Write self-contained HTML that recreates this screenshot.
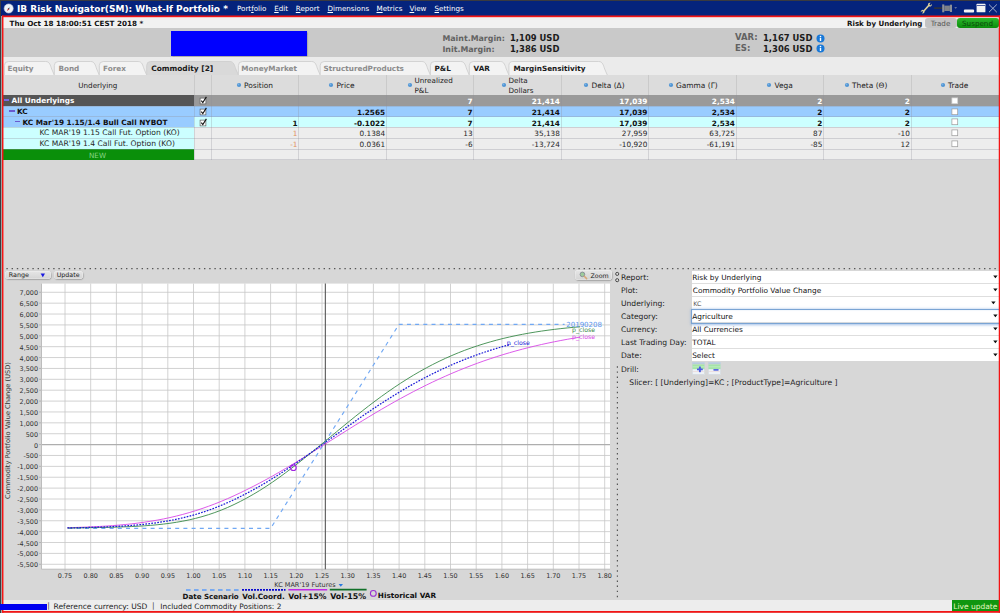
<!DOCTYPE html>
<html><head><meta charset="utf-8"><title>IB Risk Navigator</title>
<style>
html,body{margin:0;padding:0;}
body{width:1000px;height:613px;overflow:hidden;background:#d7d7d7;font-family:"DejaVu Sans","Liberation Sans",sans-serif;position:relative;}
#root{position:absolute;left:0;top:0;width:1000px;height:613px;overflow:hidden;}
#root div{position:absolute;box-sizing:border-box;}
#root svg{position:absolute;}
.t{}
u{text-decoration:underline;}
</style></head><body><div id="root">
<div style="left:0px;top:0px;width:1000px;height:613px;background:#d7d7d7;"></div>
<div style="left:0px;top:0px;width:1000px;height:16px;background:#05237c;"></div>
<div style="left:0px;top:0px;width:1000px;height:1px;background:#3a3a40;"></div>
<div style="left:0px;top:0px;width:1px;height:613px;background:#3a3a40;"></div>
<div style="left:1px;top:16px;width:1.3px;height:597px;background:#a0a0a0;"></div>
<svg style="left:0;top:0" width="1000" height="613" viewBox="0 0 1000 613"><g fill="#f41414"><rect x="2" y="15.7" width="998" height="1.5"/><rect x="2" y="15.7" width="1.45" height="596.8"/><rect x="998.75" y="15.7" width="1.25" height="596.8"/><rect x="2" y="611.1" width="998" height="1.4"/></g></svg>
<svg style="left:0px;top:0px" width="16" height="16" viewBox="0 0 16 16"><circle cx="8.7" cy="8.5" r="4.55" fill="#eef3f8" stroke="#c4ccdc" stroke-width="0.6"/><path d="M10.5 6.2 L9.3 9.2 L8.1 8.2 Z" fill="#a8b8d8"/><path d="M6.9 11.3 L8.0 8.2 L9.3 9.2 Z" fill="#e03030"/><circle cx="8.7" cy="8.7" r="0.6" fill="#333"/></svg>
<div class="t" style="top:2.70px;font-size:9.0px;line-height:12.6px;color:#fff;white-space:nowrap;font-weight:bold;left:17px;">IB Risk Navigator(SM): What-If Portfolio *</div>
<div class="t" style="top:3.90px;font-size:7.15px;line-height:10.01px;color:#fff;white-space:nowrap;left:237px;">Port<u>f</u>olio</div>
<div class="t" style="top:3.90px;font-size:7.15px;line-height:10.01px;color:#fff;white-space:nowrap;left:274.2px;"><u>E</u>dit</div>
<div class="t" style="top:3.90px;font-size:7.15px;line-height:10.01px;color:#fff;white-space:nowrap;left:295.8px;"><u>R</u>eport</div>
<div class="t" style="top:3.90px;font-size:7.15px;line-height:10.01px;color:#fff;white-space:nowrap;left:327.5px;"><u>D</u>imensions</div>
<div class="t" style="top:3.90px;font-size:7.15px;line-height:10.01px;color:#fff;white-space:nowrap;left:376.5px;"><u>M</u>etrics</div>
<div class="t" style="top:3.90px;font-size:7.15px;line-height:10.01px;color:#fff;white-space:nowrap;left:409.5px;"><u>V</u>iew</div>
<div class="t" style="top:3.90px;font-size:7.15px;line-height:10.01px;color:#fff;white-space:nowrap;left:434.5px;"><u>S</u>ettings</div>
<svg style="left:915px;top:0px" width="85" height="16" viewBox="915 0 85 16"><path d="M923.6 11.2 L929 5.2" stroke="#dccf9a" stroke-width="1.7"/><path d="M927.9 5.0 a2.2 2.2 0 0 1 2.6 -2.2 l-1.1 1.7 1.1 0.9 1.4 -1.5 a2.2 2.2 0 0 1 -2.6 2.6z" fill="#dccf9a"/><path d="M924.6 11.4 a2.1 2.1 0 0 1 -2.5 2.0 l1.0 -1.6 -1.0 -0.9 -1.3 1.4 a2.1 2.1 0 0 1 2.4 -2.4z" fill="#dccf9a"/><rect x="934.1" y="7.3" width="8.4" height="1.6" fill="#30343c"/><rect x="942.2" y="4.4" width="2.1" height="7.9" fill="#8c9098"/><rect x="944.3" y="5.6" width="5.6" height="5.4" fill="#7c8088"/><rect x="949.9" y="4.7" width="2.1" height="7.3" fill="#8c9098"/><path d="M954.3 7.2 h2.8 l-1.4 1.5z" fill="#8088a0"/><rect x="963.9" y="9.6" width="10.2" height="3" rx="1" fill="#f4f4f4"/><rect x="976.6" y="3.8" width="8.8" height="8.5" rx="0.5" fill="#f4f4f4"/><rect x="977" y="5" width="8" height="0.9" fill="#3a4f98"/><path d="M989 4.5 L996.8 12.2 M996.8 4.5 L989 12.2" stroke="#b4bcd4" stroke-width="0.9"/></svg>
<div style="left:3px;top:17px;width:995.7px;height:11.2px;background:#f1f1f1;"></div>
<div class="t" style="top:18.96px;font-size:7.2px;line-height:10.08px;color:#111;white-space:nowrap;font-weight:bold;left:9.5px;">Thu Oct 18 18:00:51 CEST 2018 *</div>
<div class="t" style="top:18.93px;font-size:7.1px;line-height:9.94px;color:#111;white-space:nowrap;font-weight:bold;left:847px;">Risk by Underlying</div>
<div style="left:925px;top:17.5px;width:31.5px;height:10.8px;background:#c3c3c3;border-radius:3px;"></div>
<div class="t" style="top:18.56px;font-size:7.2px;line-height:10.08px;color:#555;white-space:nowrap;left:740.5px;width:400px;text-align:center;">Trade</div>
<div style="left:957px;top:17.5px;width:41.5px;height:10.8px;background:linear-gradient(#2cb82c,#0c8c0c);border-radius:3px;"></div>
<div class="t" style="top:18.56px;font-size:7.2px;line-height:10.08px;color:#0a4a0a;white-space:nowrap;left:777.5px;width:400px;text-align:center;">Suspend</div>
<div style="left:3px;top:28.2px;width:995.7px;height:28.8px;background:#c9c9c9;"></div>
<div style="left:171px;top:31px;width:136px;height:24.5px;background:#0000ff;box-shadow:1.2px 1.2px 1.5px rgba(0,0,0,.45);"></div>
<div class="t" style="top:32.67px;font-size:7.9px;line-height:11.06px;color:#626262;white-space:nowrap;font-weight:bold;left:442.4px;">Maint.Margin:</div>
<div class="t" style="top:43.67px;font-size:7.9px;line-height:11.06px;color:#626262;white-space:nowrap;font-weight:bold;left:442.4px;">Init.Margin:</div>
<div class="t" style="top:32.70px;font-size:8.42px;line-height:11.79px;color:#1c1c1c;white-space:nowrap;font-weight:bold;left:510px;">1,109 USD</div>
<div class="t" style="top:43.70px;font-size:8.42px;line-height:11.79px;color:#1c1c1c;white-space:nowrap;font-weight:bold;left:510px;">1,386 USD</div>
<div class="t" style="top:32.25px;font-size:8.5px;line-height:11.9px;color:#626262;white-space:nowrap;font-weight:bold;left:735px;">VAR:</div>
<div class="t" style="top:43.25px;font-size:8.5px;line-height:11.9px;color:#626262;white-space:nowrap;font-weight:bold;left:735px;">ES:</div>
<div class="t" style="top:32.70px;font-size:8.42px;line-height:11.79px;color:#1c1c1c;white-space:nowrap;font-weight:bold;left:763px;">1,167 USD</div>
<div class="t" style="top:43.70px;font-size:8.42px;line-height:11.79px;color:#1c1c1c;white-space:nowrap;font-weight:bold;left:763px;">1,306 USD</div>
<svg style="left:815.5px;top:33.5px" width="9" height="9" viewBox="0 0 9 9"><circle cx="4.5" cy="4.5" r="4" fill="#1878d8"/><circle cx="4.5" cy="2.5" r="0.8" fill="#fff"/><rect x="3.8" y="3.8" width="1.4" height="3.2" fill="#fff"/></svg>
<svg style="left:815.5px;top:43.599999999999994px" width="9" height="9" viewBox="0 0 9 9"><circle cx="4.5" cy="4.5" r="4" fill="#1878d8"/><circle cx="4.5" cy="2.5" r="0.8" fill="#fff"/><rect x="3.8" y="3.8" width="1.4" height="3.2" fill="#fff"/></svg>
<div style="left:3px;top:57px;width:995.7px;height:18px;background:#ebebeb;"></div>
<svg style="left:0;top:57px" width="1000" height="19" viewBox="0 57 1000 19"><path d="M4.4 75.5 L4.4 65.5 Q4.4 61.5 8.4 61.5 L45.8 61.5 C49.699999999999996 61.5 50.4 65.5 51.699999999999996 69 L54.5 75.5 Z" fill="#f3f3f3" stroke="#cfcfcf" stroke-width="0.9"/><path d="M54.3 75.5 L54.3 65.5 Q54.3 61.5 58.3 61.5 L90.8 61.5 C94.7 61.5 95.39999999999999 65.5 96.7 69 L99.5 75.5 Z" fill="#f3f3f3" stroke="#cfcfcf" stroke-width="0.9"/><path d="M99.3 75.5 L99.3 65.5 Q99.3 61.5 103.3 61.5 L138.2 61.5 C142.1 61.5 142.79999999999998 65.5 144.1 69 L146.89999999999998 75.5 Z" fill="#f3f3f3" stroke="#cfcfcf" stroke-width="0.9"/><path d="M146.7 75.5 L146.7 65.5 Q146.7 61.5 150.7 61.5 L229.9 61.5 C233.8 61.5 234.5 65.5 235.8 69 L238.6 75.5 Z" fill="#d9d9d9" stroke="#cfcfcf" stroke-width="0.9"/><path d="M238.4 75.5 L238.4 65.5 Q238.4 61.5 242.4 61.5 L311.7 61.5 C315.59999999999997 61.5 316.3 65.5 317.59999999999997 69 L320.4 75.5 Z" fill="#f3f3f3" stroke="#cfcfcf" stroke-width="0.9"/><path d="M320.2 75.5 L320.2 65.5 Q320.2 61.5 324.2 61.5 L421.9 61.5 C425.79999999999995 61.5 426.5 65.5 427.79999999999995 69 L430.59999999999997 75.5 Z" fill="#f3f3f3" stroke="#cfcfcf" stroke-width="0.9"/><path d="M430.4 75.5 L430.4 65.5 Q430.4 61.5 434.4 61.5 L460.8 61.5 C464.7 61.5 465.40000000000003 65.5 466.7 69 L469.5 75.5 Z" fill="#f3f3f3" stroke="#cfcfcf" stroke-width="0.9"/><path d="M469.3 75.5 L469.3 65.5 Q469.3 61.5 473.3 61.5 L500.4 61.5 C504.29999999999995 61.5 505.0 65.5 506.29999999999995 69 L509.09999999999997 75.5 Z" fill="#f3f3f3" stroke="#cfcfcf" stroke-width="0.9"/><path d="M508.9 75.5 L508.9 65.5 Q508.9 61.5 512.9 61.5 L598.8 61.5 C602.6999999999999 61.5 603.4 65.5 604.6999999999999 69 L607.5 75.5 Z" fill="#f3f3f3" stroke="#cfcfcf" stroke-width="0.9"/></svg>
<div class="t" style="top:64.12px;font-size:7.25px;line-height:10.15px;color:#8c8c8c;white-space:nowrap;font-weight:bold;left:7.5px;">Equity</div>
<div class="t" style="top:64.12px;font-size:7.25px;line-height:10.15px;color:#8c8c8c;white-space:nowrap;font-weight:bold;left:58.4px;">Bond</div>
<div class="t" style="top:64.12px;font-size:7.25px;line-height:10.15px;color:#8c8c8c;white-space:nowrap;font-weight:bold;left:103px;">Forex</div>
<div class="t" style="top:63.98px;font-size:7.45px;line-height:10.43px;color:#1a1a1a;white-space:nowrap;font-weight:bold;left:151.2px;">Commodity [2]</div>
<div class="t" style="top:64.12px;font-size:7.25px;line-height:10.15px;color:#8c8c8c;white-space:nowrap;font-weight:bold;left:241.3px;">MoneyMarket</div>
<div class="t" style="top:64.12px;font-size:7.25px;line-height:10.15px;color:#8c8c8c;white-space:nowrap;font-weight:bold;left:323.6px;">StructuredProducts</div>
<div class="t" style="top:64.12px;font-size:7.25px;line-height:10.15px;color:#1a1a1a;white-space:nowrap;font-weight:bold;left:434.5px;">P&amp;L</div>
<div class="t" style="top:64.12px;font-size:7.25px;line-height:10.15px;color:#1a1a1a;white-space:nowrap;font-weight:bold;left:473.6px;">VAR</div>
<div class="t" style="top:64.12px;font-size:7.25px;line-height:10.15px;color:#1a1a1a;white-space:nowrap;font-weight:bold;left:513.4px;">MarginSensitivity</div>
<div style="left:3px;top:75px;width:995.7px;height:20.3px;background:#dcdcdc;"></div>
<div style="left:193.5px;top:75px;width:1px;height:20.3px;background:#cacaca;"></div>
<div style="left:210.8px;top:75px;width:1px;height:20.3px;background:#cacaca;"></div>
<div style="left:298.1px;top:75px;width:1px;height:20.3px;background:#cacaca;"></div>
<div style="left:385.7px;top:75px;width:1px;height:20.3px;background:#cacaca;"></div>
<div style="left:473.2px;top:75px;width:1px;height:20.3px;background:#cacaca;"></div>
<div style="left:560.5px;top:75px;width:1px;height:20.3px;background:#cacaca;"></div>
<div style="left:648.0px;top:75px;width:1px;height:20.3px;background:#cacaca;"></div>
<div style="left:735.5px;top:75px;width:1px;height:20.3px;background:#cacaca;"></div>
<div style="left:823.0px;top:75px;width:1px;height:20.3px;background:#cacaca;"></div>
<div style="left:910.5px;top:75px;width:1px;height:20.3px;background:#cacaca;"></div>
<div class="t" style="top:80.96px;font-size:7.2px;line-height:10.08px;color:#222;white-space:nowrap;left:-102.2px;width:400px;text-align:center;">Underlying</div>
<div class="t" style="top:80.69px;font-size:7.45px;line-height:10.43px;color:#222;white-space:nowrap;left:244px;">Position</div>
<svg style="left:235.8px;top:81.9px" width="6" height="6" viewBox="0 0 6 6"><circle cx="3" cy="3" r="2.1" fill="#4f94d4"/><circle cx="2.5" cy="2.4" r="0.9" fill="#8cc0ec" opacity=".7"/></svg>
<div class="t" style="top:80.69px;font-size:7.45px;line-height:10.43px;color:#222;white-space:nowrap;left:336.5px;">Price</div>
<svg style="left:328.3px;top:81.9px" width="6" height="6" viewBox="0 0 6 6"><circle cx="3" cy="3" r="2.1" fill="#4f94d4"/><circle cx="2.5" cy="2.4" r="0.9" fill="#8cc0ec" opacity=".7"/></svg>
<div class="t" style="top:80.69px;font-size:7.45px;line-height:10.43px;color:#222;white-space:nowrap;left:591.5px;">Delta (Δ)</div>
<svg style="left:583.3px;top:81.9px" width="6" height="6" viewBox="0 0 6 6"><circle cx="3" cy="3" r="2.1" fill="#4f94d4"/><circle cx="2.5" cy="2.4" r="0.9" fill="#8cc0ec" opacity=".7"/></svg>
<div class="t" style="top:80.69px;font-size:7.45px;line-height:10.43px;color:#222;white-space:nowrap;left:676px;">Gamma (Γ)</div>
<svg style="left:667.8px;top:81.9px" width="6" height="6" viewBox="0 0 6 6"><circle cx="3" cy="3" r="2.1" fill="#4f94d4"/><circle cx="2.5" cy="2.4" r="0.9" fill="#8cc0ec" opacity=".7"/></svg>
<div class="t" style="top:80.69px;font-size:7.45px;line-height:10.43px;color:#222;white-space:nowrap;left:774.5px;">Vega</div>
<svg style="left:766.3px;top:81.9px" width="6" height="6" viewBox="0 0 6 6"><circle cx="3" cy="3" r="2.1" fill="#4f94d4"/><circle cx="2.5" cy="2.4" r="0.9" fill="#8cc0ec" opacity=".7"/></svg>
<div class="t" style="top:80.69px;font-size:7.45px;line-height:10.43px;color:#222;white-space:nowrap;left:852px;">Theta (Θ)</div>
<svg style="left:843.8px;top:81.9px" width="6" height="6" viewBox="0 0 6 6"><circle cx="3" cy="3" r="2.1" fill="#4f94d4"/><circle cx="2.5" cy="2.4" r="0.9" fill="#8cc0ec" opacity=".7"/></svg>
<div class="t" style="top:80.69px;font-size:7.45px;line-height:10.43px;color:#222;white-space:nowrap;left:948px;">Trade</div>
<svg style="left:939.8px;top:81.9px" width="6" height="6" viewBox="0 0 6 6"><circle cx="3" cy="3" r="2.1" fill="#4f94d4"/><circle cx="2.5" cy="2.4" r="0.9" fill="#8cc0ec" opacity=".7"/></svg>
<div class="t" style="top:76.16px;font-size:7.2px;line-height:10.08px;color:#222;white-space:nowrap;left:414.5px;">Unrealized</div>
<div class="t" style="top:86.36px;font-size:7.2px;line-height:10.08px;color:#222;white-space:nowrap;left:414.5px;">P&amp;L</div>
<svg style="left:406.5px;top:82.0px" width="6" height="6" viewBox="0 0 6 6"><circle cx="3" cy="3" r="2.1" fill="#4f94d4"/><circle cx="2.5" cy="2.4" r="0.9" fill="#8cc0ec" opacity=".7"/></svg>
<div class="t" style="top:76.16px;font-size:7.2px;line-height:10.08px;color:#222;white-space:nowrap;left:508.5px;">Delta</div>
<div class="t" style="top:86.36px;font-size:7.2px;line-height:10.08px;color:#222;white-space:nowrap;left:508.5px;">Dollars</div>
<svg style="left:501px;top:82.0px" width="6" height="6" viewBox="0 0 6 6"><circle cx="3" cy="3" r="2.1" fill="#4f94d4"/><circle cx="2.5" cy="2.4" r="0.9" fill="#8cc0ec" opacity=".7"/></svg>
<div style="left:3px;top:95.3px;width:191px;height:10.700000000000003px;background:#555555;"></div>
<div style="left:194px;top:95.3px;width:804.7px;height:10.700000000000003px;background:#9a9a9a;"></div>
<div style="left:3px;top:106px;width:191px;height:10.700000000000003px;background:#99ccff;"></div>
<div style="left:194px;top:106px;width:804.7px;height:10.700000000000003px;background:#99ccff;"></div>
<div style="left:3px;top:116.7px;width:191px;height:10.700000000000003px;background:#99ccff;"></div>
<div style="left:194px;top:116.7px;width:804.7px;height:10.700000000000003px;background:#ccffff;"></div>
<div style="left:3px;top:127.4px;width:191px;height:10.799999999999983px;background:#ccffff;"></div>
<div style="left:194px;top:127.4px;width:804.7px;height:10.799999999999983px;background:#ededed;"></div>
<div style="left:3px;top:138.2px;width:191px;height:10.800000000000011px;background:#ccffff;"></div>
<div style="left:194px;top:138.2px;width:804.7px;height:10.800000000000011px;background:#ededed;"></div>
<div style="left:3px;top:149px;width:191px;height:10.800000000000011px;background:#0a8f0a;"></div>
<div style="left:194px;top:149px;width:804.7px;height:10.800000000000011px;background:#ededed;"></div>
<div style="left:3px;top:105.6px;width:995.7px;height:0.8px;background:rgba(150,150,160,.35);"></div>
<div style="left:3px;top:116.3px;width:995.7px;height:0.8px;background:rgba(150,150,160,.35);"></div>
<div style="left:3px;top:127.0px;width:995.7px;height:0.8px;background:rgba(150,150,160,.35);"></div>
<div style="left:3px;top:137.79999999999998px;width:995.7px;height:0.8px;background:rgba(150,150,160,.35);"></div>
<div style="left:3px;top:148.6px;width:995.7px;height:0.8px;background:rgba(150,150,160,.35);"></div>
<div style="left:194px;top:159.4px;width:804.7px;height:0.8px;background:rgba(150,150,160,.35);"></div>
<div style="left:193.5px;top:95.3px;width:1px;height:64.5px;background:rgba(140,140,150,.28);"></div>
<div style="left:210.8px;top:95.3px;width:1px;height:64.5px;background:rgba(140,140,150,.28);"></div>
<div style="left:298.1px;top:95.3px;width:1px;height:64.5px;background:rgba(140,140,150,.28);"></div>
<div style="left:385.7px;top:95.3px;width:1px;height:64.5px;background:rgba(140,140,150,.28);"></div>
<div style="left:473.2px;top:95.3px;width:1px;height:64.5px;background:rgba(140,140,150,.28);"></div>
<div style="left:560.5px;top:95.3px;width:1px;height:64.5px;background:rgba(140,140,150,.28);"></div>
<div style="left:648.0px;top:95.3px;width:1px;height:64.5px;background:rgba(140,140,150,.28);"></div>
<div style="left:735.5px;top:95.3px;width:1px;height:64.5px;background:rgba(140,140,150,.28);"></div>
<div style="left:823.0px;top:95.3px;width:1px;height:64.5px;background:rgba(140,140,150,.28);"></div>
<div style="left:910.5px;top:95.3px;width:1px;height:64.5px;background:rgba(140,140,150,.28);"></div>
<div class="t" style="top:96.42px;font-size:7.33px;line-height:10.26px;color:#fff;white-space:nowrap;font-weight:bold;left:11.5px;">All Underlyings</div>
<div style="left:3.9000000000000004px;top:99.35px;width:5.4px;height:1.7px;background:#7a6ae0;"></div>
<div class="t" style="top:97.24px;font-size:7.3px;line-height:10.22px;color:#fff;white-space:nowrap;font-weight:bold;right:527.4000000000001px;text-align:right;">7</div>
<div class="t" style="top:97.24px;font-size:7.3px;line-height:10.22px;color:#fff;white-space:nowrap;font-weight:bold;right:440.1px;text-align:right;">21,414</div>
<div class="t" style="top:97.24px;font-size:7.3px;line-height:10.22px;color:#fff;white-space:nowrap;font-weight:bold;right:352.6px;text-align:right;">17,039</div>
<div class="t" style="top:97.24px;font-size:7.3px;line-height:10.22px;color:#fff;white-space:nowrap;font-weight:bold;right:265.1px;text-align:right;">2,534</div>
<div class="t" style="top:97.24px;font-size:7.3px;line-height:10.22px;color:#fff;white-space:nowrap;font-weight:bold;right:177.60000000000002px;text-align:right;">2</div>
<div class="t" style="top:97.24px;font-size:7.3px;line-height:10.22px;color:#fff;white-space:nowrap;font-weight:bold;right:90.10000000000002px;text-align:right;">2</div>
<svg style="left:198.6px;top:96.25px" width="9" height="9" viewBox="0 0 9 9"><rect x="1.1" y="2.1" width="5.8" height="5.8" fill="#fff" stroke="#555" stroke-width="0.65"/><path d="M2.3 4.7 L3.8 6.6 L7.4 0.9" fill="none" stroke="#111" stroke-width="1.1"/></svg>
<svg style="left:950.5px;top:96.95px" width="8" height="8" viewBox="0 0 8 8"><rect x="0.9" y="0.9" width="5.8" height="5.8" fill="#fff" stroke="#ccc" stroke-width="0.7"/></svg>
<div class="t" style="top:107.12px;font-size:7.33px;line-height:10.26px;color:#111;white-space:nowrap;font-weight:bold;left:17px;">KC</div>
<div style="left:9.4px;top:110.04999999999998px;width:5.4px;height:1.7px;background:#6a5acd;"></div>
<div class="t" style="top:107.94px;font-size:7.3px;line-height:10.22px;color:#111;white-space:nowrap;font-weight:bold;right:614.9000000000001px;text-align:right;">1.2565</div>
<div class="t" style="top:107.94px;font-size:7.3px;line-height:10.22px;color:#111;white-space:nowrap;font-weight:bold;right:527.4000000000001px;text-align:right;">7</div>
<div class="t" style="top:107.94px;font-size:7.3px;line-height:10.22px;color:#111;white-space:nowrap;font-weight:bold;right:440.1px;text-align:right;">21,414</div>
<div class="t" style="top:107.94px;font-size:7.3px;line-height:10.22px;color:#111;white-space:nowrap;font-weight:bold;right:352.6px;text-align:right;">17,039</div>
<div class="t" style="top:107.94px;font-size:7.3px;line-height:10.22px;color:#111;white-space:nowrap;font-weight:bold;right:265.1px;text-align:right;">2,534</div>
<div class="t" style="top:107.94px;font-size:7.3px;line-height:10.22px;color:#111;white-space:nowrap;font-weight:bold;right:177.60000000000002px;text-align:right;">2</div>
<div class="t" style="top:107.94px;font-size:7.3px;line-height:10.22px;color:#111;white-space:nowrap;font-weight:bold;right:90.10000000000002px;text-align:right;">2</div>
<svg style="left:198.6px;top:106.94999999999999px" width="9" height="9" viewBox="0 0 9 9"><rect x="1.1" y="2.1" width="5.8" height="5.8" fill="#fff" stroke="#555" stroke-width="0.65"/><path d="M2.3 4.7 L3.8 6.6 L7.4 0.9" fill="none" stroke="#111" stroke-width="1.1"/></svg>
<svg style="left:950.5px;top:107.64999999999999px" width="8" height="8" viewBox="0 0 8 8"><rect x="0.9" y="0.9" width="5.8" height="5.8" fill="#fff" stroke="#9a9a9a" stroke-width="0.7"/></svg>
<div class="t" style="top:117.82px;font-size:7.33px;line-height:10.26px;color:#111;white-space:nowrap;font-weight:bold;left:22.5px;">KC Mar'19 1.15/1.4 Bull Call NYBOT</div>
<div style="left:14.9px;top:120.75px;width:5.4px;height:1.7px;background:#6a5acd;"></div>
<div class="t" style="top:118.64px;font-size:7.3px;line-height:10.22px;color:#111;white-space:nowrap;font-weight:bold;right:702.5px;text-align:right;">1</div>
<div class="t" style="top:118.64px;font-size:7.3px;line-height:10.22px;color:#111;white-space:nowrap;font-weight:bold;right:614.9000000000001px;text-align:right;">-0.1022</div>
<div class="t" style="top:118.64px;font-size:7.3px;line-height:10.22px;color:#111;white-space:nowrap;font-weight:bold;right:527.4000000000001px;text-align:right;">7</div>
<div class="t" style="top:118.64px;font-size:7.3px;line-height:10.22px;color:#111;white-space:nowrap;font-weight:bold;right:440.1px;text-align:right;">21,414</div>
<div class="t" style="top:118.64px;font-size:7.3px;line-height:10.22px;color:#111;white-space:nowrap;font-weight:bold;right:352.6px;text-align:right;">17,039</div>
<div class="t" style="top:118.64px;font-size:7.3px;line-height:10.22px;color:#111;white-space:nowrap;font-weight:bold;right:265.1px;text-align:right;">2,534</div>
<div class="t" style="top:118.64px;font-size:7.3px;line-height:10.22px;color:#111;white-space:nowrap;font-weight:bold;right:177.60000000000002px;text-align:right;">2</div>
<div class="t" style="top:118.64px;font-size:7.3px;line-height:10.22px;color:#111;white-space:nowrap;font-weight:bold;right:90.10000000000002px;text-align:right;">2</div>
<svg style="left:198.6px;top:117.65px" width="9" height="9" viewBox="0 0 9 9"><rect x="1.1" y="2.1" width="5.8" height="5.8" fill="#fff" stroke="#555" stroke-width="0.65"/><path d="M2.3 4.7 L3.8 6.6 L7.4 0.9" fill="none" stroke="#111" stroke-width="1.1"/></svg>
<svg style="left:950.5px;top:118.35000000000001px" width="8" height="8" viewBox="0 0 8 8"><rect x="0.9" y="0.9" width="5.8" height="5.8" fill="#fff" stroke="#9a9a9a" stroke-width="0.7"/></svg>
<div class="t" style="top:128.38px;font-size:7.6px;line-height:10.64px;color:#262626;white-space:nowrap;left:39.5px;">KC MAR'19 1.15 Call Fut. Option (KO)</div>
<div class="t" style="top:129.39px;font-size:7.3px;line-height:10.22px;color:#e2945e;white-space:nowrap;right:702.5px;text-align:right;">1</div>
<div class="t" style="top:129.39px;font-size:7.3px;line-height:10.22px;color:#262626;white-space:nowrap;right:614.9000000000001px;text-align:right;">0.1384</div>
<div class="t" style="top:129.39px;font-size:7.3px;line-height:10.22px;color:#262626;white-space:nowrap;right:527.4000000000001px;text-align:right;">13</div>
<div class="t" style="top:129.39px;font-size:7.3px;line-height:10.22px;color:#262626;white-space:nowrap;right:440.1px;text-align:right;">35,138</div>
<div class="t" style="top:129.39px;font-size:7.3px;line-height:10.22px;color:#262626;white-space:nowrap;right:352.6px;text-align:right;">27,959</div>
<div class="t" style="top:129.39px;font-size:7.3px;line-height:10.22px;color:#262626;white-space:nowrap;right:265.1px;text-align:right;">63,725</div>
<div class="t" style="top:129.39px;font-size:7.3px;line-height:10.22px;color:#262626;white-space:nowrap;right:177.60000000000002px;text-align:right;">87</div>
<div class="t" style="top:129.39px;font-size:7.3px;line-height:10.22px;color:#262626;white-space:nowrap;right:90.10000000000002px;text-align:right;">-10</div>
<svg style="left:950.5px;top:129.10000000000002px" width="8" height="8" viewBox="0 0 8 8"><rect x="0.9" y="0.9" width="5.8" height="5.8" fill="#fff" stroke="#9a9a9a" stroke-width="0.7"/></svg>
<div class="t" style="top:139.18px;font-size:7.6px;line-height:10.64px;color:#262626;white-space:nowrap;left:39.5px;">KC MAR'19 1.4 Call Fut. Option (KO)</div>
<div class="t" style="top:140.19px;font-size:7.3px;line-height:10.22px;color:#e2945e;white-space:nowrap;right:702.5px;text-align:right;">-1</div>
<div class="t" style="top:140.19px;font-size:7.3px;line-height:10.22px;color:#262626;white-space:nowrap;right:614.9000000000001px;text-align:right;">0.0361</div>
<div class="t" style="top:140.19px;font-size:7.3px;line-height:10.22px;color:#262626;white-space:nowrap;right:527.4000000000001px;text-align:right;">-6</div>
<div class="t" style="top:140.19px;font-size:7.3px;line-height:10.22px;color:#262626;white-space:nowrap;right:440.1px;text-align:right;">-13,724</div>
<div class="t" style="top:140.19px;font-size:7.3px;line-height:10.22px;color:#262626;white-space:nowrap;right:352.6px;text-align:right;">-10,920</div>
<div class="t" style="top:140.19px;font-size:7.3px;line-height:10.22px;color:#262626;white-space:nowrap;right:265.1px;text-align:right;">-61,191</div>
<div class="t" style="top:140.19px;font-size:7.3px;line-height:10.22px;color:#262626;white-space:nowrap;right:177.60000000000002px;text-align:right;">-85</div>
<div class="t" style="top:140.19px;font-size:7.3px;line-height:10.22px;color:#262626;white-space:nowrap;right:90.10000000000002px;text-align:right;">12</div>
<svg style="left:950.5px;top:139.9px" width="8" height="8" viewBox="0 0 8 8"><rect x="0.9" y="0.9" width="5.8" height="5.8" fill="#fff" stroke="#9a9a9a" stroke-width="0.7"/></svg>
<div class="t" style="top:150.56px;font-size:7.2px;line-height:10.08px;color:#86d486;white-space:nowrap;left:-102.5px;width:400px;text-align:center;">NEW</div>
<div style="left:3px;top:159.8px;width:995.7px;height:440px;background:#d7d7d7;"></div>
<svg style="left:0;top:0" width="1000" height="613"><line x1="6.4" y1="268.6" x2="997" y2="268.6" stroke="#555" stroke-width="1.2" stroke-dasharray="1.4 3.8"/></svg>
<div style="left:5px;top:271.2px;width:46px;height:7.6px;background:linear-gradient(#e6e6e6,#d4d4d4);border-radius:3.2px;box-shadow:0.5px 0.8px 1.2px rgba(0,0,0,.3),inset 0 0 0 0.5px rgba(255,255,255,.5);"></div>
<div class="t" style="top:271.32px;font-size:6.4px;line-height:8.96px;color:#222;white-space:nowrap;left:8.8px;text-shadow:none;">Range</div>
<svg style="left:40px;top:272.8px" width="6" height="5" viewBox="0 0 6 5"><path d="M0.6 0.6 H5 L2.8 4.2Z" fill="#1a1ae0"/></svg>
<div style="left:53.6px;top:271.2px;width:29.5px;height:7.6px;background:linear-gradient(#e6e6e6,#d4d4d4);border-radius:3.2px;box-shadow:0.5px 0.8px 1.2px rgba(0,0,0,.3),inset 0 0 0 0.5px rgba(255,255,255,.5);"></div>
<div class="t" style="top:271.39px;font-size:6.3px;line-height:8.82px;color:#222;white-space:nowrap;left:-131.9px;width:400px;text-align:center;text-shadow:none;">Update</div>
<div style="left:575px;top:270px;width:36.5px;height:10px;background:linear-gradient(#e6e6e6,#d4d4d4);border-radius:3.2px;box-shadow:0.5px 0.8px 1.2px rgba(0,0,0,.3),inset 0 0 0 0.5px rgba(255,255,255,.5);"></div>
<div class="t" style="top:271.59px;font-size:6.3px;line-height:8.82px;color:#222;white-space:nowrap;left:590.5px;text-shadow:none;">Zoom</div>
<svg style="left:579px;top:270.5px" width="10" height="9" viewBox="0 0 10 9"><circle cx="3.4" cy="3.4" r="2.3" fill="#9ccc9c" stroke="#8a9098" stroke-width="1"/><path d="M5.3 5.3 L7.6 7.6" stroke="#d8a878" stroke-width="1.5" stroke-linecap="round"/></svg>
<svg style="left:0;top:0" width="1000" height="613" viewBox="0 0 1000 613"><rect x="41.5" y="283.6" width="568.5" height="285.6" fill="#fff"/><line x1="65.00" y1="283.6" x2="65.00" y2="569.2" stroke="#c7c7c7" stroke-width="0.8"/><line x1="65.00" y1="569.2" x2="65.00" y2="570.8000000000001" stroke="#b4b4b4" stroke-width="0.8"/><line x1="90.70" y1="283.6" x2="90.70" y2="569.2" stroke="#c7c7c7" stroke-width="0.8"/><line x1="90.70" y1="569.2" x2="90.70" y2="570.8000000000001" stroke="#b4b4b4" stroke-width="0.8"/><line x1="116.40" y1="283.6" x2="116.40" y2="569.2" stroke="#c7c7c7" stroke-width="0.8"/><line x1="116.40" y1="569.2" x2="116.40" y2="570.8000000000001" stroke="#b4b4b4" stroke-width="0.8"/><line x1="142.10" y1="283.6" x2="142.10" y2="569.2" stroke="#c7c7c7" stroke-width="0.8"/><line x1="142.10" y1="569.2" x2="142.10" y2="570.8000000000001" stroke="#b4b4b4" stroke-width="0.8"/><line x1="167.80" y1="283.6" x2="167.80" y2="569.2" stroke="#c7c7c7" stroke-width="0.8"/><line x1="167.80" y1="569.2" x2="167.80" y2="570.8000000000001" stroke="#b4b4b4" stroke-width="0.8"/><line x1="193.50" y1="283.6" x2="193.50" y2="569.2" stroke="#c7c7c7" stroke-width="0.8"/><line x1="193.50" y1="569.2" x2="193.50" y2="570.8000000000001" stroke="#b4b4b4" stroke-width="0.8"/><line x1="219.20" y1="283.6" x2="219.20" y2="569.2" stroke="#c7c7c7" stroke-width="0.8"/><line x1="219.20" y1="569.2" x2="219.20" y2="570.8000000000001" stroke="#b4b4b4" stroke-width="0.8"/><line x1="244.90" y1="283.6" x2="244.90" y2="569.2" stroke="#c7c7c7" stroke-width="0.8"/><line x1="244.90" y1="569.2" x2="244.90" y2="570.8000000000001" stroke="#b4b4b4" stroke-width="0.8"/><line x1="270.60" y1="283.6" x2="270.60" y2="569.2" stroke="#c7c7c7" stroke-width="0.8"/><line x1="270.60" y1="569.2" x2="270.60" y2="570.8000000000001" stroke="#b4b4b4" stroke-width="0.8"/><line x1="296.30" y1="283.6" x2="296.30" y2="569.2" stroke="#c7c7c7" stroke-width="0.8"/><line x1="296.30" y1="569.2" x2="296.30" y2="570.8000000000001" stroke="#b4b4b4" stroke-width="0.8"/><line x1="322.00" y1="283.6" x2="322.00" y2="569.2" stroke="#c7c7c7" stroke-width="0.8"/><line x1="322.00" y1="569.2" x2="322.00" y2="570.8000000000001" stroke="#b4b4b4" stroke-width="0.8"/><line x1="347.70" y1="283.6" x2="347.70" y2="569.2" stroke="#c7c7c7" stroke-width="0.8"/><line x1="347.70" y1="569.2" x2="347.70" y2="570.8000000000001" stroke="#b4b4b4" stroke-width="0.8"/><line x1="373.40" y1="283.6" x2="373.40" y2="569.2" stroke="#c7c7c7" stroke-width="0.8"/><line x1="373.40" y1="569.2" x2="373.40" y2="570.8000000000001" stroke="#b4b4b4" stroke-width="0.8"/><line x1="399.10" y1="283.6" x2="399.10" y2="569.2" stroke="#c7c7c7" stroke-width="0.8"/><line x1="399.10" y1="569.2" x2="399.10" y2="570.8000000000001" stroke="#b4b4b4" stroke-width="0.8"/><line x1="424.80" y1="283.6" x2="424.80" y2="569.2" stroke="#c7c7c7" stroke-width="0.8"/><line x1="424.80" y1="569.2" x2="424.80" y2="570.8000000000001" stroke="#b4b4b4" stroke-width="0.8"/><line x1="450.50" y1="283.6" x2="450.50" y2="569.2" stroke="#c7c7c7" stroke-width="0.8"/><line x1="450.50" y1="569.2" x2="450.50" y2="570.8000000000001" stroke="#b4b4b4" stroke-width="0.8"/><line x1="476.20" y1="283.6" x2="476.20" y2="569.2" stroke="#c7c7c7" stroke-width="0.8"/><line x1="476.20" y1="569.2" x2="476.20" y2="570.8000000000001" stroke="#b4b4b4" stroke-width="0.8"/><line x1="501.90" y1="283.6" x2="501.90" y2="569.2" stroke="#c7c7c7" stroke-width="0.8"/><line x1="501.90" y1="569.2" x2="501.90" y2="570.8000000000001" stroke="#b4b4b4" stroke-width="0.8"/><line x1="527.60" y1="283.6" x2="527.60" y2="569.2" stroke="#c7c7c7" stroke-width="0.8"/><line x1="527.60" y1="569.2" x2="527.60" y2="570.8000000000001" stroke="#b4b4b4" stroke-width="0.8"/><line x1="553.30" y1="283.6" x2="553.30" y2="569.2" stroke="#c7c7c7" stroke-width="0.8"/><line x1="553.30" y1="569.2" x2="553.30" y2="570.8000000000001" stroke="#b4b4b4" stroke-width="0.8"/><line x1="579.00" y1="283.6" x2="579.00" y2="569.2" stroke="#c7c7c7" stroke-width="0.8"/><line x1="579.00" y1="569.2" x2="579.00" y2="570.8000000000001" stroke="#b4b4b4" stroke-width="0.8"/><line x1="604.70" y1="283.6" x2="604.70" y2="569.2" stroke="#c7c7c7" stroke-width="0.8"/><line x1="604.70" y1="569.2" x2="604.70" y2="570.8000000000001" stroke="#b4b4b4" stroke-width="0.8"/><line x1="41.5" y1="564.28" x2="610" y2="564.28" stroke="#c7c7c7" stroke-width="0.8"/><line x1="39.0" y1="564.28" x2="41.5" y2="564.28" stroke="#aaa" stroke-width="0.8"/><line x1="41.5" y1="553.40" x2="610" y2="553.40" stroke="#c7c7c7" stroke-width="0.8"/><line x1="39.0" y1="553.40" x2="41.5" y2="553.40" stroke="#aaa" stroke-width="0.8"/><line x1="41.5" y1="542.52" x2="610" y2="542.52" stroke="#c7c7c7" stroke-width="0.8"/><line x1="39.0" y1="542.52" x2="41.5" y2="542.52" stroke="#aaa" stroke-width="0.8"/><line x1="41.5" y1="531.64" x2="610" y2="531.64" stroke="#c7c7c7" stroke-width="0.8"/><line x1="39.0" y1="531.64" x2="41.5" y2="531.64" stroke="#aaa" stroke-width="0.8"/><line x1="41.5" y1="520.76" x2="610" y2="520.76" stroke="#c7c7c7" stroke-width="0.8"/><line x1="39.0" y1="520.76" x2="41.5" y2="520.76" stroke="#aaa" stroke-width="0.8"/><line x1="41.5" y1="509.88" x2="610" y2="509.88" stroke="#c7c7c7" stroke-width="0.8"/><line x1="39.0" y1="509.88" x2="41.5" y2="509.88" stroke="#aaa" stroke-width="0.8"/><line x1="41.5" y1="499.00" x2="610" y2="499.00" stroke="#c7c7c7" stroke-width="0.8"/><line x1="39.0" y1="499.00" x2="41.5" y2="499.00" stroke="#aaa" stroke-width="0.8"/><line x1="41.5" y1="488.12" x2="610" y2="488.12" stroke="#c7c7c7" stroke-width="0.8"/><line x1="39.0" y1="488.12" x2="41.5" y2="488.12" stroke="#aaa" stroke-width="0.8"/><line x1="41.5" y1="477.24" x2="610" y2="477.24" stroke="#c7c7c7" stroke-width="0.8"/><line x1="39.0" y1="477.24" x2="41.5" y2="477.24" stroke="#aaa" stroke-width="0.8"/><line x1="41.5" y1="466.36" x2="610" y2="466.36" stroke="#c7c7c7" stroke-width="0.8"/><line x1="39.0" y1="466.36" x2="41.5" y2="466.36" stroke="#aaa" stroke-width="0.8"/><line x1="41.5" y1="455.48" x2="610" y2="455.48" stroke="#c7c7c7" stroke-width="0.8"/><line x1="39.0" y1="455.48" x2="41.5" y2="455.48" stroke="#aaa" stroke-width="0.8"/><line x1="41.5" y1="444.60" x2="610" y2="444.60" stroke="#aeaeae" stroke-width="1.35"/><line x1="39.0" y1="444.60" x2="41.5" y2="444.60" stroke="#aaa" stroke-width="0.8"/><line x1="41.5" y1="433.72" x2="610" y2="433.72" stroke="#c7c7c7" stroke-width="0.8"/><line x1="39.0" y1="433.72" x2="41.5" y2="433.72" stroke="#aaa" stroke-width="0.8"/><line x1="41.5" y1="422.84" x2="610" y2="422.84" stroke="#c7c7c7" stroke-width="0.8"/><line x1="39.0" y1="422.84" x2="41.5" y2="422.84" stroke="#aaa" stroke-width="0.8"/><line x1="41.5" y1="411.96" x2="610" y2="411.96" stroke="#c7c7c7" stroke-width="0.8"/><line x1="39.0" y1="411.96" x2="41.5" y2="411.96" stroke="#aaa" stroke-width="0.8"/><line x1="41.5" y1="401.08" x2="610" y2="401.08" stroke="#c7c7c7" stroke-width="0.8"/><line x1="39.0" y1="401.08" x2="41.5" y2="401.08" stroke="#aaa" stroke-width="0.8"/><line x1="41.5" y1="390.20" x2="610" y2="390.20" stroke="#c7c7c7" stroke-width="0.8"/><line x1="39.0" y1="390.20" x2="41.5" y2="390.20" stroke="#aaa" stroke-width="0.8"/><line x1="41.5" y1="379.32" x2="610" y2="379.32" stroke="#c7c7c7" stroke-width="0.8"/><line x1="39.0" y1="379.32" x2="41.5" y2="379.32" stroke="#aaa" stroke-width="0.8"/><line x1="41.5" y1="368.44" x2="610" y2="368.44" stroke="#c7c7c7" stroke-width="0.8"/><line x1="39.0" y1="368.44" x2="41.5" y2="368.44" stroke="#aaa" stroke-width="0.8"/><line x1="41.5" y1="357.56" x2="610" y2="357.56" stroke="#c7c7c7" stroke-width="0.8"/><line x1="39.0" y1="357.56" x2="41.5" y2="357.56" stroke="#aaa" stroke-width="0.8"/><line x1="41.5" y1="346.68" x2="610" y2="346.68" stroke="#c7c7c7" stroke-width="0.8"/><line x1="39.0" y1="346.68" x2="41.5" y2="346.68" stroke="#aaa" stroke-width="0.8"/><line x1="41.5" y1="335.80" x2="610" y2="335.80" stroke="#c7c7c7" stroke-width="0.8"/><line x1="39.0" y1="335.80" x2="41.5" y2="335.80" stroke="#aaa" stroke-width="0.8"/><line x1="41.5" y1="324.92" x2="610" y2="324.92" stroke="#c7c7c7" stroke-width="0.8"/><line x1="39.0" y1="324.92" x2="41.5" y2="324.92" stroke="#aaa" stroke-width="0.8"/><line x1="41.5" y1="314.04" x2="610" y2="314.04" stroke="#c7c7c7" stroke-width="0.8"/><line x1="39.0" y1="314.04" x2="41.5" y2="314.04" stroke="#aaa" stroke-width="0.8"/><line x1="41.5" y1="303.16" x2="610" y2="303.16" stroke="#c7c7c7" stroke-width="0.8"/><line x1="39.0" y1="303.16" x2="41.5" y2="303.16" stroke="#aaa" stroke-width="0.8"/><line x1="41.5" y1="292.28" x2="610" y2="292.28" stroke="#c7c7c7" stroke-width="0.8"/><line x1="39.0" y1="292.28" x2="41.5" y2="292.28" stroke="#aaa" stroke-width="0.8"/><path d="M41.5 283.6 V569.2 H610" fill="none" stroke="#bdbdbd" stroke-width="1"/><line x1="325.34" y1="283.6" x2="325.34" y2="569.2" stroke="#555" stroke-width="1.1"/><polyline points="68.6,528.4 270.6,528.4 399.1,324.3 564.6,324.3" fill="none" stroke="#70a8f4" stroke-width="1.15" stroke-dasharray="4 4.2"/><polyline points="67.47,527.72 73.87,527.54 80.28,527.32 86.69,527.08 93.10,526.79 99.50,526.46 105.91,526.08 112.32,525.64 118.72,525.12 125.13,524.53 131.54,523.86 137.94,523.09 144.35,522.22 150.76,521.23 157.17,520.13 163.57,518.91 169.98,517.55 176.39,516.05 182.79,514.40 189.20,512.61 195.61,510.67 202.01,508.57 208.42,506.31 214.83,503.90 221.24,501.33 227.64,498.61 234.05,495.74 240.46,492.73 246.86,489.60 253.27,486.39 259.68,483.05 266.08,479.60 272.49,476.05 278.90,472.39 285.31,468.65 291.71,464.83 298.12,460.94 304.53,457.00 310.93,453.02 317.34,449.00 323.75,444.97 330.15,440.92 336.56,436.87 342.97,432.84 349.38,428.82 355.78,424.84 362.19,420.90 368.60,417.00 375.00,413.15 381.41,409.37 387.82,405.66 394.22,402.03 400.63,398.47 407.04,395.00 413.45,391.62 419.85,388.33 426.26,385.14 432.67,382.04 439.07,379.04 445.48,376.15 451.89,373.35 458.29,370.66 464.70,368.07 471.11,365.58 477.52,363.19 483.92,360.90 490.33,358.71 496.74,356.62 503.14,354.62 509.55,352.71 515.96,350.90 522.36,349.17 528.77,347.52 535.18,345.96 541.59,344.48 547.99,343.08 554.40,341.75 560.81,340.50 567.21,339.31 573.62,338.19 580.03,337.13" fill="none" stroke="#d848e8" stroke-width="0.9"/><polyline points="67.47,528.03 73.87,527.95 80.28,527.85 86.69,527.76 93.10,527.65 99.50,527.53 105.91,527.39 112.32,527.23 118.72,527.04 125.13,526.82 131.54,526.54 137.94,526.22 144.35,525.82 150.76,525.34 157.17,524.76 163.57,524.07 169.98,523.25 176.39,522.29 182.79,521.16 189.20,519.86 195.61,518.36 202.01,516.65 208.42,514.71 214.83,512.54 221.24,510.13 227.64,507.46 234.05,504.54 240.46,501.36 246.86,497.96 253.27,494.35 259.68,490.51 266.08,486.43 272.49,482.14 278.90,477.65 285.31,472.98 291.71,468.15 298.12,463.18 304.53,458.09 310.93,452.91 317.34,447.66 323.75,442.37 330.15,437.06 336.56,431.75 342.97,426.47 349.38,421.24 355.78,416.07 362.19,411.00 368.60,406.02 375.00,401.17 381.41,396.45 387.82,391.88 394.22,387.46 400.63,383.20 407.04,379.12 413.45,375.20 419.85,371.47 426.26,367.92 432.67,364.54 439.07,361.35 445.48,358.33 451.89,355.49 458.29,352.82 464.70,350.31 471.11,347.97 477.52,345.79 483.92,343.75 490.33,341.86 496.74,340.10 503.14,338.48 509.55,336.98 515.96,335.59 522.36,334.32 528.77,333.15 535.18,332.07 541.59,331.09 547.99,330.19 554.40,329.37 560.81,328.62 567.21,327.94 573.62,327.33 580.03,326.77" fill="none" stroke="#3a8a4a" stroke-width="0.9"/><polyline points="67.47,527.95 73.01,527.85 78.55,527.74 84.09,527.61 89.63,527.47 95.17,527.31 100.71,527.12 106.24,526.91 111.78,526.67 117.32,526.38 122.86,526.05 128.40,525.68 133.94,525.24 139.48,524.74 145.02,524.17 150.56,523.53 156.10,522.79 161.64,521.96 167.18,521.03 172.72,520.00 178.26,518.84 183.80,517.57 189.34,516.17 194.88,514.63 200.42,512.96 205.96,511.14 211.50,509.18 217.04,507.07 222.58,504.82 228.12,502.42 233.66,499.87 239.20,497.18 244.74,494.35 250.28,491.45 255.81,488.42 261.35,485.26 266.89,481.98 272.43,478.59 277.97,475.10 283.51,471.52 289.05,467.85 294.59,464.10 300.13,460.29 305.67,456.43 311.21,452.52 316.75,448.58 322.29,444.61 327.83,440.64 333.37,436.65 338.91,432.68 344.45,428.72 349.99,424.79 355.53,420.90 361.07,417.04 366.61,413.24 372.15,409.49 377.69,405.81 383.23,402.19 388.77,398.66 394.31,395.20 399.85,391.83 405.38,388.54 410.92,385.35 416.46,382.25 422.00,379.25 427.54,376.34 433.08,373.54 438.62,370.83 444.16,368.23 449.70,365.72 455.24,363.31 460.78,361.01 466.32,358.80 471.86,356.68 477.40,354.66 482.94,352.73 488.48,350.90 494.02,349.15 499.56,347.48 505.10,345.90 510.64,344.40" fill="none" stroke="#1c1cd8" stroke-width="1.25" stroke-dasharray="1.7 1.3"/><circle cx="293.4" cy="467.7" r="2.8" fill="none" stroke="#a024e0" stroke-width="1.2"/><line x1="186" y1="589.9" x2="239" y2="589.9" stroke="#5c9cf8" stroke-width="1.5" stroke-dasharray="4.6 3.4"/><line x1="242" y1="589.9" x2="285.5" y2="589.9" stroke="#0808d0" stroke-width="1.8" stroke-dasharray="2 1"/><line x1="288.3" y1="589.8" x2="327.2" y2="589.8" stroke="#c028e8" stroke-width="1.6"/><line x1="329.8" y1="589.6" x2="366.6" y2="589.6" stroke="#107028" stroke-width="1.6"/><circle cx="373.3" cy="593.4" r="2.9" fill="none" stroke="#9a30d0" stroke-width="1.1"/><path d="M338.6 583.9 h4.4 l-2.2 2.8z" fill="#2a7ae0"/></svg>
<div class="t" style="top:561.26px;font-size:6.45px;line-height:9.03px;color:#333;white-space:nowrap;right:962px;text-align:right;text-shadow:none;">-5,500</div>
<div class="t" style="top:550.39px;font-size:6.45px;line-height:9.03px;color:#333;white-space:nowrap;right:962px;text-align:right;text-shadow:none;">-5,000</div>
<div class="t" style="top:539.50px;font-size:6.45px;line-height:9.03px;color:#333;white-space:nowrap;right:962px;text-align:right;text-shadow:none;">-4,500</div>
<div class="t" style="top:528.62px;font-size:6.45px;line-height:9.03px;color:#333;white-space:nowrap;right:962px;text-align:right;text-shadow:none;">-4,000</div>
<div class="t" style="top:517.75px;font-size:6.45px;line-height:9.03px;color:#333;white-space:nowrap;right:962px;text-align:right;text-shadow:none;">-3,500</div>
<div class="t" style="top:506.87px;font-size:6.45px;line-height:9.03px;color:#333;white-space:nowrap;right:962px;text-align:right;text-shadow:none;">-3,000</div>
<div class="t" style="top:495.99px;font-size:6.45px;line-height:9.03px;color:#333;white-space:nowrap;right:962px;text-align:right;text-shadow:none;">-2,500</div>
<div class="t" style="top:485.11px;font-size:6.45px;line-height:9.03px;color:#333;white-space:nowrap;right:962px;text-align:right;text-shadow:none;">-2,000</div>
<div class="t" style="top:474.23px;font-size:6.45px;line-height:9.03px;color:#333;white-space:nowrap;right:962px;text-align:right;text-shadow:none;">-1,500</div>
<div class="t" style="top:463.35px;font-size:6.45px;line-height:9.03px;color:#333;white-space:nowrap;right:962px;text-align:right;text-shadow:none;">-1,000</div>
<div class="t" style="top:452.47px;font-size:6.45px;line-height:9.03px;color:#333;white-space:nowrap;right:962px;text-align:right;text-shadow:none;">-500</div>
<div class="t" style="top:441.59px;font-size:6.45px;line-height:9.03px;color:#333;white-space:nowrap;right:962px;text-align:right;text-shadow:none;">0</div>
<div class="t" style="top:430.71px;font-size:6.45px;line-height:9.03px;color:#333;white-space:nowrap;right:962px;text-align:right;text-shadow:none;">500</div>
<div class="t" style="top:419.83px;font-size:6.45px;line-height:9.03px;color:#333;white-space:nowrap;right:962px;text-align:right;text-shadow:none;">1,000</div>
<div class="t" style="top:408.95px;font-size:6.45px;line-height:9.03px;color:#333;white-space:nowrap;right:962px;text-align:right;text-shadow:none;">1,500</div>
<div class="t" style="top:398.07px;font-size:6.45px;line-height:9.03px;color:#333;white-space:nowrap;right:962px;text-align:right;text-shadow:none;">2,000</div>
<div class="t" style="top:387.19px;font-size:6.45px;line-height:9.03px;color:#333;white-space:nowrap;right:962px;text-align:right;text-shadow:none;">2,500</div>
<div class="t" style="top:376.31px;font-size:6.45px;line-height:9.03px;color:#333;white-space:nowrap;right:962px;text-align:right;text-shadow:none;">3,000</div>
<div class="t" style="top:365.43px;font-size:6.45px;line-height:9.03px;color:#333;white-space:nowrap;right:962px;text-align:right;text-shadow:none;">3,500</div>
<div class="t" style="top:354.55px;font-size:6.45px;line-height:9.03px;color:#333;white-space:nowrap;right:962px;text-align:right;text-shadow:none;">4,000</div>
<div class="t" style="top:343.67px;font-size:6.45px;line-height:9.03px;color:#333;white-space:nowrap;right:962px;text-align:right;text-shadow:none;">4,500</div>
<div class="t" style="top:332.79px;font-size:6.45px;line-height:9.03px;color:#333;white-space:nowrap;right:962px;text-align:right;text-shadow:none;">5,000</div>
<div class="t" style="top:321.91px;font-size:6.45px;line-height:9.03px;color:#333;white-space:nowrap;right:962px;text-align:right;text-shadow:none;">5,500</div>
<div class="t" style="top:311.03px;font-size:6.45px;line-height:9.03px;color:#333;white-space:nowrap;right:962px;text-align:right;text-shadow:none;">6,000</div>
<div class="t" style="top:300.15px;font-size:6.45px;line-height:9.03px;color:#333;white-space:nowrap;right:962px;text-align:right;text-shadow:none;">6,500</div>
<div class="t" style="top:289.26px;font-size:6.45px;line-height:9.03px;color:#333;white-space:nowrap;right:962px;text-align:right;text-shadow:none;">7,000</div>
<div class="t" style="top:572.09px;font-size:6.45px;line-height:9.03px;color:#333;white-space:nowrap;left:-135.0px;width:400px;text-align:center;text-shadow:none;">0.75</div>
<div class="t" style="top:572.09px;font-size:6.45px;line-height:9.03px;color:#333;white-space:nowrap;left:-109.29999999999998px;width:400px;text-align:center;text-shadow:none;">0.80</div>
<div class="t" style="top:572.09px;font-size:6.45px;line-height:9.03px;color:#333;white-space:nowrap;left:-83.60000000000002px;width:400px;text-align:center;text-shadow:none;">0.85</div>
<div class="t" style="top:572.09px;font-size:6.45px;line-height:9.03px;color:#333;white-space:nowrap;left:-57.89999999999998px;width:400px;text-align:center;text-shadow:none;">0.90</div>
<div class="t" style="top:572.09px;font-size:6.45px;line-height:9.03px;color:#333;white-space:nowrap;left:-32.200000000000045px;width:400px;text-align:center;text-shadow:none;">0.95</div>
<div class="t" style="top:572.09px;font-size:6.45px;line-height:9.03px;color:#333;white-space:nowrap;left:-6.5px;width:400px;text-align:center;text-shadow:none;">1.00</div>
<div class="t" style="top:572.09px;font-size:6.45px;line-height:9.03px;color:#333;white-space:nowrap;left:19.200000000000017px;width:400px;text-align:center;text-shadow:none;">1.05</div>
<div class="t" style="top:572.09px;font-size:6.45px;line-height:9.03px;color:#333;white-space:nowrap;left:44.900000000000034px;width:400px;text-align:center;text-shadow:none;">1.10</div>
<div class="t" style="top:572.09px;font-size:6.45px;line-height:9.03px;color:#333;white-space:nowrap;left:70.59999999999991px;width:400px;text-align:center;text-shadow:none;">1.15</div>
<div class="t" style="top:572.09px;font-size:6.45px;line-height:9.03px;color:#333;white-space:nowrap;left:96.29999999999995px;width:400px;text-align:center;text-shadow:none;">1.20</div>
<div class="t" style="top:572.09px;font-size:6.45px;line-height:9.03px;color:#333;white-space:nowrap;left:122.0px;width:400px;text-align:center;text-shadow:none;">1.25</div>
<div class="t" style="top:572.09px;font-size:6.45px;line-height:9.03px;color:#333;white-space:nowrap;left:147.7px;width:400px;text-align:center;text-shadow:none;">1.30</div>
<div class="t" style="top:572.09px;font-size:6.45px;line-height:9.03px;color:#333;white-space:nowrap;left:173.40000000000003px;width:400px;text-align:center;text-shadow:none;">1.35</div>
<div class="t" style="top:572.09px;font-size:6.45px;line-height:9.03px;color:#333;white-space:nowrap;left:199.09999999999997px;width:400px;text-align:center;text-shadow:none;">1.40</div>
<div class="t" style="top:572.09px;font-size:6.45px;line-height:9.03px;color:#333;white-space:nowrap;left:224.80000000000007px;width:400px;text-align:center;text-shadow:none;">1.45</div>
<div class="t" style="top:572.09px;font-size:6.45px;line-height:9.03px;color:#333;white-space:nowrap;left:250.5px;width:400px;text-align:center;text-shadow:none;">1.50</div>
<div class="t" style="top:572.09px;font-size:6.45px;line-height:9.03px;color:#333;white-space:nowrap;left:276.2px;width:400px;text-align:center;text-shadow:none;">1.55</div>
<div class="t" style="top:572.09px;font-size:6.45px;line-height:9.03px;color:#333;white-space:nowrap;left:301.9px;width:400px;text-align:center;text-shadow:none;">1.60</div>
<div class="t" style="top:572.09px;font-size:6.45px;line-height:9.03px;color:#333;white-space:nowrap;left:327.5999999999999px;width:400px;text-align:center;text-shadow:none;">1.65</div>
<div class="t" style="top:572.09px;font-size:6.45px;line-height:9.03px;color:#333;white-space:nowrap;left:353.30000000000007px;width:400px;text-align:center;text-shadow:none;">1.70</div>
<div class="t" style="top:572.09px;font-size:6.45px;line-height:9.03px;color:#333;white-space:nowrap;left:379.0px;width:400px;text-align:center;text-shadow:none;">1.75</div>
<div class="t" style="top:572.09px;font-size:6.45px;line-height:9.03px;color:#333;white-space:nowrap;left:404.69999999999993px;width:400px;text-align:center;text-shadow:none;">1.80</div>
<div class="t" style="top:320.67px;font-size:7.0px;line-height:9.8px;color:#5a96f0;white-space:nowrap;left:566.3px;">20190208</div>
<div class="t" style="top:325.86px;font-size:6.2px;line-height:8.68px;color:#3a8a4a;white-space:nowrap;left:572px;">p_close</div>
<div class="t" style="top:332.56px;font-size:6.2px;line-height:8.68px;color:#d848e8;white-space:nowrap;left:572px;">p_close</div>
<div class="t" style="top:338.86px;font-size:6.2px;line-height:8.68px;color:#1c1cd8;white-space:nowrap;left:506.8px;">p_close</div>
<div class="t" style="left:-92.3px;top:425.8px;width:200px;height:9px;line-height:9px;font-size:6.63px;color:#333;text-align:center;white-space:nowrap;transform:rotate(-90deg);text-shadow:none;">Commodity Portfolio Value Change (USD)</div>
<div class="t" style="top:581.45px;font-size:6.5px;line-height:9.1px;color:#333;white-space:nowrap;left:274.3px;text-shadow:none;">KC MAR'19 Futures</div>
<div class="t" style="top:592.03px;font-size:7.1px;line-height:9.94px;color:#111;white-space:nowrap;font-weight:bold;left:182.6px;">Date Scenario</div>
<div class="t" style="top:591.89px;font-size:7.3px;line-height:10.22px;color:#111;white-space:nowrap;font-weight:bold;left:242.2px;">Vol.Coord.</div>
<div class="t" style="top:591.61px;font-size:7.7px;line-height:10.78px;color:#111;white-space:nowrap;font-weight:bold;left:288.2px;">Vol+15%</div>
<div class="t" style="top:591.47px;font-size:7.9px;line-height:11.06px;color:#111;white-space:nowrap;font-weight:bold;left:330.2px;">Vol-15%</div>
<div class="t" style="top:591.09px;font-size:7.3px;line-height:10.22px;color:#111;white-space:nowrap;font-weight:bold;left:377.8px;">Historical VAR</div>
<svg style="left:0;top:0" width="1000" height="613"><line x1="617.4" y1="366.3" x2="617.4" y2="599" stroke="#555" stroke-width="1.2" stroke-dasharray="1.4 3.7"/><circle cx="617.2" cy="273.9" r="1.55" fill="#dcdcdc" stroke="#333" stroke-width="0.85"/><circle cx="617.2" cy="280.2" r="1.55" fill="#dcdcdc" stroke="#333" stroke-width="0.85"/></svg>
<div style="left:691.8px;top:270.8px;width:306.9px;height:90.3px;background:#fff;"></div>
<div class="t" style="top:272.69px;font-size:7.6px;line-height:10.64px;color:#222;white-space:nowrap;left:621px;">Report:</div>
<div class="t" style="top:272.85px;font-size:7.38px;line-height:10.33px;color:#111;white-space:nowrap;left:692.2px;">Risk by Underlying</div>
<svg style="left:993px;top:274.815px" width="5" height="4" viewBox="0 0 5 4"><path d="M0.2 0.4 H4.6 L2.4 3.2Z" fill="#111"/></svg>
<div class="t" style="top:285.72px;font-size:7.6px;line-height:10.64px;color:#222;white-space:nowrap;left:621px;">Plot:</div>
<div class="t" style="top:285.88px;font-size:7.38px;line-height:10.33px;color:#111;white-space:nowrap;left:692.8px;">Commodity Portfolio Value Change</div>
<div style="left:691.8px;top:283.33px;width:306.9px;height:1px;background:#dedede;"></div>
<svg style="left:993px;top:287.84499999999997px" width="5" height="4" viewBox="0 0 5 4"><path d="M0.2 0.4 H4.6 L2.4 3.2Z" fill="#111"/></svg>
<div class="t" style="top:298.75px;font-size:7.6px;line-height:10.64px;color:#222;white-space:nowrap;left:621px;">Underlying:</div>
<div class="t" style="top:299.56px;font-size:6.3px;line-height:8.82px;color:#5a5a5a;white-space:nowrap;left:693.2px;text-shadow:none;">KC</div>
<div style="left:691.8px;top:296.36px;width:306.9px;height:1px;background:#dedede;"></div>
<svg style="left:990.6px;top:300.875px" width="5" height="4" viewBox="0 0 5 4"><path d="M0.2 0.4 H4.6 L2.4 3.2Z" fill="#111"/></svg>
<div class="t" style="top:311.78px;font-size:7.6px;line-height:10.64px;color:#222;white-space:nowrap;left:621px;">Category:</div>
<div class="t" style="top:311.94px;font-size:7.38px;line-height:10.33px;color:#111;white-space:nowrap;left:692.2px;">Agriculture</div>
<div style="left:691.8px;top:309.39px;width:306.9px;height:1px;background:#dedede;"></div>
<svg style="left:993px;top:313.905px" width="5" height="4" viewBox="0 0 5 4"><path d="M0.2 0.4 H4.6 L2.4 3.2Z" fill="#111"/></svg>
<div class="t" style="top:324.81px;font-size:7.6px;line-height:10.64px;color:#222;white-space:nowrap;left:621px;">Currency:</div>
<div class="t" style="top:324.97px;font-size:7.38px;line-height:10.33px;color:#111;white-space:nowrap;left:692.2px;">All Currencies</div>
<div style="left:691.8px;top:322.42px;width:306.9px;height:1px;background:#dedede;"></div>
<svg style="left:993px;top:326.935px" width="5" height="4" viewBox="0 0 5 4"><path d="M0.2 0.4 H4.6 L2.4 3.2Z" fill="#111"/></svg>
<div class="t" style="top:337.84px;font-size:7.6px;line-height:10.64px;color:#222;white-space:nowrap;left:621px;">Last Trading Day:</div>
<div class="t" style="top:338.00px;font-size:7.38px;line-height:10.33px;color:#111;white-space:nowrap;left:692.2px;">TOTAL</div>
<div style="left:691.8px;top:335.45px;width:306.9px;height:1px;background:#dedede;"></div>
<svg style="left:993px;top:339.965px" width="5" height="4" viewBox="0 0 5 4"><path d="M0.2 0.4 H4.6 L2.4 3.2Z" fill="#111"/></svg>
<div class="t" style="top:350.88px;font-size:7.6px;line-height:10.64px;color:#222;white-space:nowrap;left:621px;">Date:</div>
<div class="t" style="top:351.03px;font-size:7.38px;line-height:10.33px;color:#111;white-space:nowrap;left:692.2px;">Select</div>
<div style="left:691.8px;top:348.48px;width:306.9px;height:1px;background:#dedede;"></div>
<svg style="left:993px;top:352.995px" width="5" height="4" viewBox="0 0 5 4"><path d="M0.2 0.4 H4.6 L2.4 3.2Z" fill="#111"/></svg>
<div style="left:691.3px;top:309.28999999999996px;width:307.6px;height:14.229999999999999px;background:transparent;border:0.9px solid #7aa4d4;border-left-width:0.8px;border-right:none;box-shadow:0 0 2.5px 0.5px rgba(100,150,215,.6), inset 0 0 1.5px rgba(100,150,215,.4);"></div>
<div class="t" style="top:364.50px;font-size:7.6px;line-height:10.64px;color:#222;white-space:nowrap;left:621px;">Drill:</div>
<svg style="left:692px;top:362.2px" width="13" height="13" viewBox="0 0 13 13"><rect x="0.2" y="0.2" width="12.5" height="12.4" fill="#eef2f6"/><rect x="0.2" y="0.2" width="12.5" height="2.2" fill="#b4cce4"/><rect x="0.2" y="1.9" width="12.5" height="0.5" fill="#d8b8a0" opacity=".7"/><rect x="0.2" y="2.4" width="12.5" height="4.8" fill="#a4e4a8"/><rect x="0.2" y="4.2" width="12.5" height="1.2" fill="#c4f0c4" opacity=".7"/><rect x="0.8" y="9.2" width="11" height="0.5" fill="#e8b0b0" opacity=".6"/><rect x="0.2" y="0.2" width="12.5" height="12.4" fill="none" stroke="#c4ccd8" stroke-width="0.4"/><rect x="5" y="6.4" width="5.8" height="1.9" rx="0.4" fill="#4a5ce0"/><rect x="6.95" y="4.4" width="1.9" height="5.8" rx="0.4" fill="#4a5ce0"/></svg>
<svg style="left:707.6px;top:362.2px" width="13" height="13" viewBox="0 0 13 13"><rect x="0.2" y="0.2" width="12.5" height="12.4" fill="#eef2f6"/><rect x="0.2" y="0.2" width="12.5" height="2.2" fill="#b4cce4"/><rect x="0.2" y="1.9" width="12.5" height="0.5" fill="#d8b8a0" opacity=".7"/><rect x="0.2" y="2.4" width="12.5" height="4.8" fill="#a4e4a8"/><rect x="0.2" y="4.2" width="12.5" height="1.2" fill="#c4f0c4" opacity=".7"/><rect x="0.8" y="9.2" width="11" height="0.5" fill="#e8b0b0" opacity=".6"/><rect x="0.2" y="0.2" width="12.5" height="12.4" fill="none" stroke="#c4ccd8" stroke-width="0.4"/><rect x="5.4" y="6.9" width="5.2" height="1.8" rx="0.4" fill="#5a6ae0"/></svg>
<div class="t" style="top:378.17px;font-size:7.62px;line-height:10.67px;color:#222;white-space:nowrap;left:629.3px;">Slicer: [ [Underlying]=KC ; [ProductType]=Agriculture ]</div>
<div style="left:3px;top:600px;width:995.7px;height:11.2px;background:#ededed;"></div>
<div class="t" style="top:601.28px;font-size:7.6px;line-height:10.64px;color:#444;white-space:nowrap;left:47.2px;">|</div>
<div class="t" style="top:601.92px;font-size:7.55px;line-height:10.57px;color:#222;white-space:nowrap;left:53.5px;">Reference currency: USD</div>
<div class="t" style="top:601.28px;font-size:7.6px;line-height:10.64px;color:#444;white-space:nowrap;left:151.9px;">|</div>
<div class="t" style="top:602.02px;font-size:7.4px;line-height:10.36px;color:#222;white-space:nowrap;left:160.3px;">Included Commodity Positions: 2</div>
<div style="left:951.8px;top:600.4px;width:47px;height:10.8px;background:#0f960f;"></div>
<div class="t" style="top:601.75px;font-size:7.5px;line-height:10.5px;color:#e4f6c0;white-space:nowrap;left:775.3px;width:400px;text-align:center;">Live update</div>
<svg style="left:0;top:0" width="1000" height="613" viewBox="0 0 1000 613"><g fill="#f41414"><rect x="2" y="15.7" width="998" height="1.5"/><rect x="2" y="15.7" width="1.45" height="596.8"/><rect x="998.75" y="15.7" width="1.25" height="596.8"/><rect x="2" y="611.1" width="998" height="1.4"/></g></svg>
<div style="left:0px;top:604px;width:47px;height:5.5px;background:#0000f0;"></div>
</div></body></html>
